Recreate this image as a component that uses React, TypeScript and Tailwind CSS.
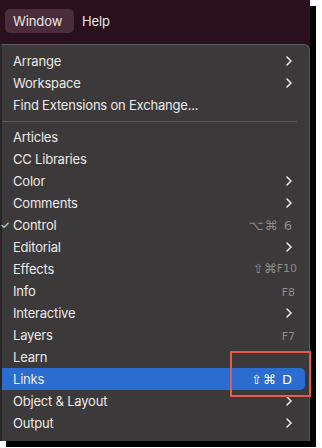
import React from "react";

type Item = {
  label: string;
  sub?: boolean;
  keys?: React.ReactNode;
  checked?: boolean;
  active?: boolean;
};

const Chevron = () => (
  <svg width="6" height="10" viewBox="0 0 6 10" className="mr-[1px]">
    <polyline
      points="1,1 5,5 1,9"
      fill="none"
      stroke="#e9e7e7"
      strokeWidth="1.6"
      strokeLinecap="round"
      strokeLinejoin="round"
    />
  </svg>
);

const top: Item[] = [
  { label: "Arrange", sub: true },
  { label: "Workspace", sub: true },
  { label: "Find Extensions on Exchange..." },
];

const rest: Item[] = [
  { label: "Articles" },
  { label: "CC Libraries" },
  { label: "Color", sub: true },
  { label: "Comments", sub: true },
  {
    label: "Control",
    checked: true,
    keys: <span className="text-[13px] tracking-[1px]">⌥⌘ 6</span>,
  },
  { label: "Editorial", sub: true },
  {
    label: "Effects",
    keys: (
      <span className="flex items-center mr-[-4px]">
        <span className="text-[13px]">⇧⌘</span>
        <span className="text-[11px]">F10</span>
      </span>
    ),
  },
  { label: "Info", keys: <span className="text-[11px] mr-[-2px]">F8</span> },
  { label: "Interactive", sub: true },
  { label: "Layers", keys: <span className="text-[11px] mr-[-2px]">F7</span> },
  { label: "Learn" },
  {
    label: "Links",
    active: true,
    keys: <span className="text-[13px] tracking-[1px] text-white">⇧⌘ D</span>,
  },
  { label: "Object & Layout", sub: true },
  { label: "Output", sub: true },
];

function Row({ item }: { item: Item }) {
  return (
    <div
      className={
        "relative h-[22px] mr-[4px] pl-[11px] pr-[12px] flex items-center justify-between rounded-r-[5px] " +
        (item.active ? "bg-[#2b6cd0]" : "")
      }
    >
      {item.checked && (
        <span className="absolute left-[-2px] text-[11px] text-[#e9e7e7]">✓</span>
      )}
      <span className="text-[13px] tracking-[-0.2px] text-[#ebe9e9] pt-[2px]">{item.label}</span>
      {item.sub && <Chevron />}
      {item.keys && (
        <span className="text-[#8e8c8c] font-['DejaVu_Sans',sans-serif]">{item.keys}</span>
      )}
    </div>
  );
}

export default function App() {
  return (
    <div className="w-[322px] h-[448px] bg-white relative overflow-hidden font-['Inter',sans-serif]">
      <div className="w-[310px] h-[441px] flex flex-col bg-[#2a0f1c] shadow-[6px_6px_0_#000]">
        <div className="h-[44px] flex items-start pt-[9px] pl-[5px] gap-[8px] text-[13px] tracking-[-0.1px] text-[#ece8ea]">
          <div className="w-[69px] h-[24px] rounded-[5px] bg-[#4a2c3a] flex items-center pl-[8px] pt-[2px]">
            Window
          </div>
          <div className="h-[24px] flex items-center pt-[2px]">Help</div>
        </div>
        <div className="flex-1 bg-[#3b3939] border-l-[2px] border-l-[#272525] border-t border-r border-t-[#5c5a5a] border-r-[#5c5a5a] rounded-tr-[6px] pt-[5px]">
          {top.map((it) => (
            <Row key={it.label} item={it} />
          ))}
          <div className="h-[10px] flex items-center mr-[12px]">
            <div className="h-px w-full bg-[#5b5959]" />
          </div>
          {rest.map((it) => (
            <Row key={it.label} item={it} />
          ))}
        </div>
      </div>
      <div className="absolute left-[230px] top-[351px] w-[81px] h-[46px] border-2 border-[#e8584d]" />
    </div>
  );
}
